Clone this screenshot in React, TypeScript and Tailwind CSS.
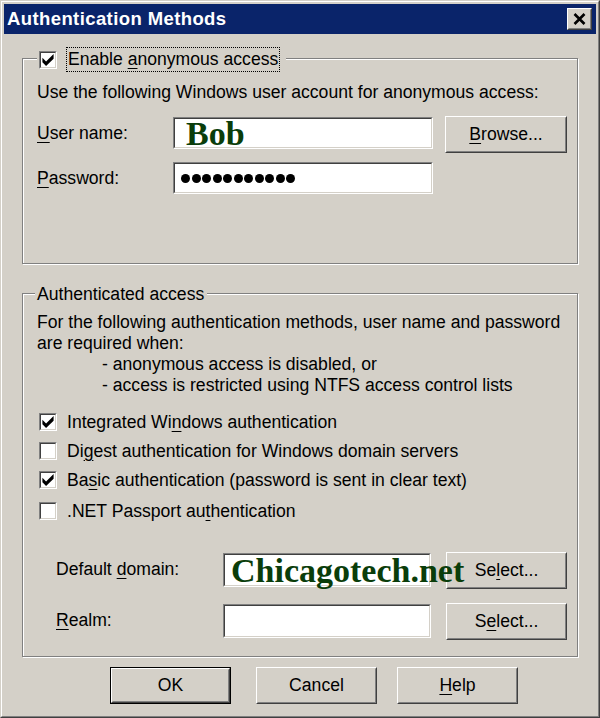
import React from "react";

const FONT = "font-['Liberation_Sans',Arial,sans-serif]";

function U({ children }: { children: React.ReactNode }) {
  return <span className="underline underline-offset-[3px] decoration-1">{children}</span>;
}

function Check({ checked }: { checked?: boolean }) {
  return (
    <div className="w-[18px] h-[18px] shrink-0 border border-t-[#808080] border-l-[#808080] border-b-white border-r-white">
      <div className="w-full h-full border border-t-[#404040] border-l-[#404040] border-b-[#d4d0c8] border-r-[#d4d0c8] bg-white flex items-center justify-center">
        {checked && (
          <svg width="12" height="12" viewBox="0 0 7 7.5">
            <path d="M0 2.4 L2.3 4.7 L7 0 L7 3.0 L2.3 7.5 L0 5.2 Z" fill="#000" />
          </svg>
        )}
      </div>
    </div>
  );
}

function Field({ className, children }: { className: string; children?: React.ReactNode }) {
  return (
    <div className={`shrink-0 border border-t-[#808080] border-l-[#808080] border-b-white border-r-white ${className}`}>
      <div className="w-full h-full border border-t-[#404040] border-l-[#404040] border-b-[#d4d0c8] border-r-[#d4d0c8] bg-white flex items-center overflow-visible">
        {children}
      </div>
    </div>
  );
}

function Btn({ className, children, def }: { className: string; children: React.ReactNode; def?: boolean }) {
  const inner = (
    <div className="w-full h-full border border-t-white border-l-white border-b-[#404040] border-r-[#404040]">
      <div className="w-full h-full border border-t-[#d4d0c8] border-l-[#d4d0c8] border-b-[#808080] border-r-[#808080] flex items-center justify-center text-black">
        {children}
      </div>
    </div>
  );
  if (def) {
    return <div className={`shrink-0 border border-black ${className}`}>{inner}</div>;
  }
  return <div className={`shrink-0 ${className}`}>{inner}</div>;
}

function CheckRow({ checked, children, className = "" }: { checked?: boolean; children: React.ReactNode; className?: string }) {
  return (
    <div className={`h-[29px] flex items-center pl-[16px] ${className}`}>
      <Check checked={checked} />
      <span className="ml-[10px] leading-[20px]">{children}</span>
    </div>
  );
}

export default function App() {
  return (
    <div className={`w-[600px] h-[718px] bg-[#d4d0c8] border border-t-[#d4d0c8] border-l-[#d4d0c8] border-b-[#404040] border-r-[#404040] ${FONT} text-[17.6px] text-black`}>
      <div className="w-full h-full border border-t-white border-l-white border-b-[#808080] border-r-[#808080] p-[2px] flex flex-col">
        {/* Title bar */}
        <div className="h-[30px] bg-[#0a246a] flex items-center justify-between pl-[3px] pr-[4px] shrink-0">
          <span className="text-white font-bold text-[18.5px] tracking-[0.4px] leading-none">Authentication Methods</span>
          <div className="w-[25px] h-[22px] border border-t-white border-l-white border-b-[#404040] border-r-[#404040] bg-[#d4d0c8]">
            <div className="w-full h-full border border-t-[#d4d0c8] border-l-[#d4d0c8] border-b-[#808080] border-r-[#808080] flex items-center justify-center">
              <svg width="13" height="12" viewBox="0 0 13 12">
                <path d="M1.5 1 L11.5 11 M11.5 1 L1.5 11" stroke="#000" strokeWidth="2.6" />
              </svg>
            </div>
          </div>
        </div>

        {/* Group 1 */}
        <div className="mt-[24px] ml-[18px] w-[556px] h-[206px] shrink-0 border border-[#808080] shadow-[inset_1px_1px_0_#fff,1px_1px_0_#fff] flex flex-col">
          <div className="-mt-[12px] ml-[14px] h-[25px] self-start flex items-center bg-[#d4d0c8] pl-[2px] pr-[6px]">
            <Check checked />
            <span className="ml-[9px] h-[25px] border border-dotted border-black px-[1px] flex items-center leading-none">
              <span>Enable <U>a</U>nonymous access</span>
            </span>
          </div>
          <div className="mt-[10px] pl-[14px] leading-[20px] h-[20px]">
            Use the following Windows user account for anonymous access:
          </div>
          <div className="mt-[14px] h-[37px] flex items-start pl-[14px]">
            <div className="w-[136px] h-[32px] mt-[1px] flex items-center"><span><U>U</U>ser name:</span></div>
            <Field className="w-[260px] h-[32px] mt-[1px]">
              <span className="pl-[11px] font-['Liberation_Serif',serif] font-bold text-[34px] leading-none text-[#0a3d0a] whitespace-nowrap relative top-[1px]">
                Bob
              </span>
            </Field>
            <Btn className="ml-[12px] w-[122px] h-[37px]"><span><U>B</U>rowse...</span></Btn>
          </div>
          <div className="mt-[9px] h-[32px] flex items-start pl-[14px]">
            <div className="w-[136px] h-[32px] flex items-center"><span><U>P</U>assword:</span></div>
            <Field className="w-[260px] h-[32px]">
              <div className="pl-[6px] flex gap-[1.5px]">
                {Array.from({ length: 11 }).map((_, i) => (
                  <div key={i} className="w-[9px] h-[9px] rounded-full bg-black" />
                ))}
              </div>
            </Field>
          </div>
        </div>

        {/* Group 2 */}
        <div className="mt-[29px] ml-[18px] w-[556px] h-[364px] shrink-0 border border-[#808080] shadow-[inset_1px_1px_0_#fff,1px_1px_0_#fff] flex flex-col">
          <div className="-mt-[9px] ml-[12px] h-[20px] self-start flex items-center bg-[#d4d0c8] pl-[2px] pr-[3px] leading-none">
            <span>Authenticated access</span>
          </div>
          <div className="mt-[7px] pl-[14px] leading-[21px]">
            <div>For the following authentication methods, user name and password</div>
            <div>are required when:</div>
            <div className="pl-[65px]">- anonymous access is disabled, or</div>
            <div className="pl-[65px]">- access is restricted using NTFS access control lists</div>
          </div>
          <div className="mt-[11px] flex flex-col">
            <CheckRow checked>Integrated Wi<U>n</U>dows authentication</CheckRow>
            <CheckRow>Di<U>g</U>est authentication for Windows domain servers</CheckRow>
            <CheckRow checked>Ba<U>s</U>ic authentication (password is sent in clear text)</CheckRow>
            <CheckRow className="mt-[2px]">.NET Passport au<U>t</U>hentication</CheckRow>
          </div>
          <div className="mt-[27px] h-[37px] flex items-start pl-[33px]">
            <div className="w-[167px] h-[35px] flex items-center"><span>Default <U>d</U>omain:</span></div>
            <Field className="w-[208px] h-[34px] mt-[1px]">
              <span className="pl-[6px] font-['Liberation_Serif',serif] font-bold text-[34px] leading-none text-[#0a3d0a] whitespace-nowrap relative z-10 top-[1px]">
                Chicagotech.net
              </span>
            </Field>
            <Btn className="ml-[15px] w-[121px] h-[37px]"><span>Se<U>l</U>ect...</span></Btn>
          </div>
          <div className="mt-[14px] h-[37px] flex items-start pl-[33px]">
            <div className="w-[167px] h-[35px] flex items-center"><span><U>R</U>ealm:</span></div>
            <Field className="w-[208px] h-[34px] mt-[1px]" />
            <Btn className="ml-[15px] w-[121px] h-[37px]"><span>S<U>e</U>lect...</span></Btn>
          </div>
        </div>

        {/* Bottom buttons */}
        <div className="mt-[10px] flex items-start pl-[106px]">
          <Btn def className="w-[121px] h-[37px]"><span>OK</span></Btn>
          <Btn className="ml-[25px] w-[121px] h-[37px]"><span>Cancel</span></Btn>
          <Btn className="ml-[20px] w-[121px] h-[37px]"><span><U>H</U>elp</span></Btn>
        </div>
      </div>
    </div>
  );
}
